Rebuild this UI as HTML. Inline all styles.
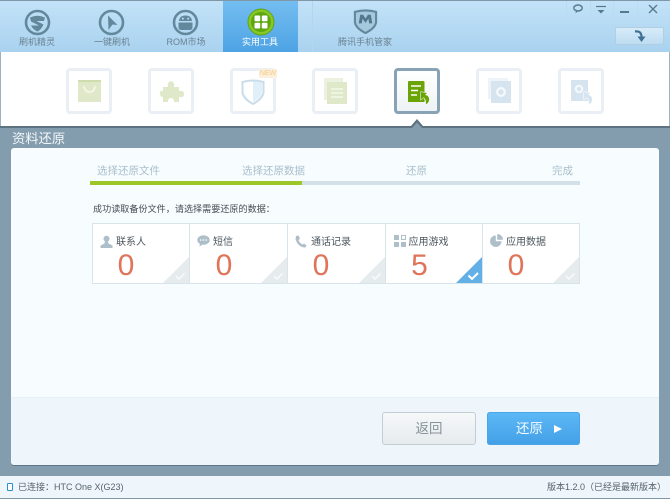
<!DOCTYPE html>
<html lang="zh">
<head>
<meta charset="utf-8">
<style>
html{margin:0;padding:0;width:670px;height:499px;overflow:hidden;background:#849dae}
body{margin:0;padding:0;width:670px;height:499px;overflow:hidden;background:#849dae;font-family:"Liberation Sans","Noto Sans CJK SC",sans-serif;position:relative;filter:blur(.35px)}
div,span,svg{position:absolute;display:block}
.t{white-space:nowrap;line-height:1}
.navt{font-size:9px;color:#6a8292;top:38px;text-align:center;width:80px}
.tile{top:68px;width:40px;height:40px;border:3px solid #e9eff4;border-radius:4px;background:#fff}
.card{top:223px;height:59px;background:#fff;border:1px solid #d9e4ea;box-sizing:content-box}
.lab{font-size:10px;color:#4d575e;top:14px}
.num{font-size:30px;color:#e0745a;top:27px;width:70px;text-align:center;line-height:30px;position:absolute}
.step{font-size:10.5px;color:#a9bfcb;top:166px}
.sep{top:1px;width:1px;height:17px;background:#badbf1}
</style>
</head>
<body>
<!-- top bar -->
<div style="left:0;top:0;width:670px;height:52px;background:linear-gradient(#c2e2f8,#a9d2ef);border-top:1px solid #7f97a6;box-sizing:border-box"></div>
<div style="left:223px;top:1px;width:75px;height:51px;background:linear-gradient(#73bdf0,#4ea3e4)"></div>
<div style="left:312px;top:1px;width:1px;height:51px;background:#b3d6ee"></div>

<svg style="left:24px;top:9px" width="27" height="27" viewBox="0 0 27 27"><circle cx="13.5" cy="13.5" r="11.5" fill="none" stroke="#62889c" stroke-width="2.6"/><path d="M6 8.5 Q13.5 5 21 8.5 L20 12 H12.5 L19.5 15.5 Q17 21 13.5 22.5 Q9 20.5 7 16.5 L15 16.5 L7 12.5Z" fill="#62889c"/></svg>
<div class="t navt" style="left:-3px">刷机精灵</div>

<svg style="left:98px;top:9px" width="27" height="27" viewBox="0 0 27 27"><circle cx="13.5" cy="13.5" r="11.5" fill="none" stroke="#62889c" stroke-width="2.6"/><path d="M10 6.5 L19.5 16 L14.5 15.5 L10.5 21Z" fill="#62889c"/></svg>
<div class="t navt" style="left:72px">一键刷机</div>

<svg style="left:172px;top:9px" width="27" height="27" viewBox="0 0 27 27"><circle cx="13.5" cy="13.5" r="11.5" fill="none" stroke="#62889c" stroke-width="2.6"/><path d="M7 12 Q7.5 6.5 13.5 6.5 Q19.5 6.5 20 12Z M6.5 13.5 H20.5 V18 Q20.5 21 17.5 21 H9.5 Q6.5 21 6.5 18Z" fill="#62889c"/><circle cx="10.8" cy="9.6" r="1" fill="#bcdcf2"/><circle cx="16.2" cy="9.6" r="1" fill="#bcdcf2"/></svg>
<div class="t navt" style="left:146px">ROM市场</div>

<svg style="left:247px;top:8px" width="28" height="28" viewBox="0 0 28 28"><circle cx="14" cy="14" r="13" fill="#86c926"/><circle cx="14" cy="14" r="13" fill="none" stroke="#5fa415" stroke-width="1"/><circle cx="14" cy="14" r="10" fill="#5fa70f"/><rect x="7.5" y="7.5" width="5.7" height="5.7" rx="1" fill="#fff"/><rect x="14.8" y="7.5" width="5.7" height="5.7" rx="1" fill="#fff"/><rect x="7.5" y="14.8" width="5.7" height="5.7" rx="1" fill="#fff"/><rect x="14.8" y="14.8" width="5.7" height="5.7" rx="1" fill="#fff"/></svg>
<div class="t navt" style="left:220px;color:#fff">实用工具</div>

<svg style="left:353px;top:9px" width="25" height="25" viewBox="0 0 26 26"><path d="M2 3 Q13 0 24 3 V14 Q23 20 13 25 Q3 20 2 14Z" fill="#a5c9df" stroke="#62889c" stroke-width="2.2"/><path d="M6 15 L7.5 6 H10.5 L13 10 L15.5 6 H18.5 L20 15 H16.8 L16 10 L13 14.5 L10 10 L9.2 15Z" fill="#52788e"/></svg>
<div class="t navt" style="left:325px">腾讯手机管家</div>

<!-- window controls -->
<div class="sep" style="left:566px"></div><div class="sep" style="left:590px"></div><div class="sep" style="left:613px"></div><div class="sep" style="left:637px"></div>
<svg style="left:571px;top:3px" width="14" height="12" viewBox="0 0 14 12"><ellipse cx="7" cy="5" rx="4.2" ry="3" fill="none" stroke="#58788c" stroke-width="1.4"/><path d="M5 8 L4.5 10.5 L7 8Z" fill="#58788c"/></svg>
<svg style="left:595px;top:5px" width="12" height="10" viewBox="0 0 12 10"><path d="M1 1.5 H11" stroke="#58788c" stroke-width="1.2"/><path d="M2.5 5 H9.5 L6 8.5Z" fill="#58788c"/></svg>
<div style="left:620px;top:11px;width:9px;height:1.5px;background:#58788c"></div>
<svg style="left:647px;top:3px" width="12" height="12" viewBox="0 0 12 12"><path d="M2 2 L10 10 M10 2 L2 10" stroke="#58788c" stroke-width="1.3"/></svg>
<div style="left:615px;top:27px;width:49px;height:18px;box-sizing:border-box;border:1px solid #b0cfe2;border-radius:2px;background:linear-gradient(#d6ebf9,#bedcf0)"></div>
<svg style="left:634px;top:29px" width="14" height="14" viewBox="0 0 14 14"><path d="M1 2.5 Q7.5 1.5 7.5 8" fill="none" stroke="#3f7193" stroke-width="2.2"/><path d="M3.5 7.5 H11.5 L7.5 13Z" fill="#3f7193"/></svg>

<!-- tool strip -->
<div style="left:0;top:52px;width:670px;height:74px;background:#fff"></div>
<div style="left:0;top:52px;width:1px;height:74px;background:#9fb2bf"></div>
<div style="left:669px;top:52px;width:1px;height:74px;background:#9fb2bf"></div>
<div style="left:0;top:126px;width:670px;height:2px;background:#5d7382"></div>

<div class="tile" style="left:66px"></div>
<svg style="left:78px;top:80px" width="23" height="23" viewBox="0 0 23 23"><rect width="23" height="22" fill="#dfe8c8"/><rect y="0" width="23" height="2" fill="#cfdcae"/><path d="M6 6 Q6.5 12 11.5 12 Q16.5 12 17 6" fill="none" stroke="#f4f8e8" stroke-width="1.6"/></svg>

<div class="tile" style="left:148px"></div>
<svg style="left:160px;top:79px" width="24" height="24" viewBox="0 0 24 24"><path d="M3 8 H8 Q7 3 11 2 Q15 3 14 8 H19 V12 Q24 11 24 15 Q24 19 19 18 V23 H14 Q14 19 11 19 Q8 19 8 23 H3 V18 Q0 18 0 14 Q0 11 3 12Z" fill="#dfe8c8"/></svg>

<div class="tile" style="left:230px"></div>
<svg style="left:241px;top:79px" width="24" height="26" viewBox="0 0 24 26"><path d="M1.5 3 Q12 0 22.5 3 V14 Q21 20 12 25 Q3 20 1.5 14Z" fill="#fff" stroke="#c9dcea" stroke-width="2"/><path d="M12 2.5 Q18 2.5 21 4 V14 Q20 18.5 12 23Z" fill="#e1eff9"/></svg>
<div class="t" style="left:259px;top:69px;width:18px;height:9px;background:#fdf0da;border-radius:1px;color:#f5c98d;font-size:7px;line-height:9px;text-align:center">NEW</div>

<div class="tile" style="left:312px"></div>
<svg style="left:324px;top:78px" width="23" height="26" viewBox="0 0 23 26"><rect x="0" y="0" width="19" height="22" fill="#edf2e0"/><rect x="3" y="4" width="20" height="22" fill="#dfe8c8"/><path d="M7 11 H19 M7 15 H19 M7 19 H19" stroke="#f4f8e8" stroke-width="1.4"/></svg>

<div style="left:394px;top:68px;width:40px;height:40px;border:3px solid #88a3b6;border-radius:4px;background:linear-gradient(#fff,#eef2f5)"></div>
<svg style="left:407px;top:80px" width="24" height="26" viewBox="0 0 24 26"><path d="M1 2 Q1 1 2 1 H16.5 Q17.5 1 17.5 2 V22 H1Z" fill="#6aa406"/><path d="M4 6 H14 M4 10.5 H11 M4 15 H10" stroke="#fff" stroke-width="1.4"/><path d="M14 12 V19.5 L16.5 17.5 Q19 18 19 24.5 Q23 22 22 18 Q21 15 18 15 L20 13Z" fill="#6aa406" stroke="#fff" stroke-width="1" paint-order="stroke"/></svg>

<div class="tile" style="left:476px"></div>
<svg style="left:488px;top:78px" width="24" height="26" viewBox="0 0 24 26"><rect width="20" height="21" fill="#edf3f8"/><rect x="3" y="3" width="20" height="22" fill="#d6e4ef"/><circle cx="13" cy="14" r="3.8" fill="none" stroke="#f3f8fb" stroke-width="2.4"/></svg>

<div class="tile" style="left:558px"></div>
<svg style="left:571px;top:80px" width="24" height="26" viewBox="0 0 24 26"><rect width="17" height="21" fill="#d6e4ef"/><circle cx="8" cy="9" r="3.2" fill="none" stroke="#f3f8fb" stroke-width="2.2"/><path d="M13 12 V19.5 L15.5 17.5 Q18 18 18 24.5 Q22 22 21 18 Q20 15 17 15 L19 13Z" fill="#d6e4ef" stroke="#fff" stroke-width="1" paint-order="stroke"/></svg>

<svg style="left:406px;top:118px" width="22" height="10" viewBox="0 0 22 10"><path d="M0 8 H5 L11 1 L17 8 H22 V10 H0Z" fill="#5d7382"/><path d="M6 10 L11 4.5 L16 10Z" fill="#849dae"/></svg>

<!-- title -->
<div class="t" style="left:12px;top:132px;font-size:13.3px;color:#f2f7fa">资料还原</div>

<!-- panel -->
<div style="left:11px;top:148px;width:648px;height:317px;background:#f7fcff;border-radius:3px;box-shadow:0 1px 0 #5f7686"></div>
<div style="left:11px;top:397px;width:648px;height:68px;background:#eef5fb;border-top:1px solid #e8eff5;box-sizing:border-box;border-radius:0 0 3px 3px"></div>

<!-- steps -->
<div class="t step" style="left:97px">选择还原文件</div>
<div class="t step" style="left:242px">选择还原数据</div>
<div class="t step" style="left:406px">还原</div>
<div class="t step" style="left:552px">完成</div>
<div style="left:90px;top:181px;width:490px;height:4px;background:#d3e0e7"></div>
<div style="left:90px;top:181px;width:212px;height:4px;background:#9dc629"></div>

<div class="t" style="left:93px;top:205px;font-size:9.1px;color:#444d53">成功读取备份文件，请选择需要还原的数据：</div>

<!-- cards -->
<div class="card" style="left:92px;width:96px">
  <svg style="left:7px;top:11px" width="13" height="13" viewBox="0 0 13 13"><circle cx="6.5" cy="3.8" r="3" fill="#aebfca"/><path d="M5 6 H8 L8.5 8.5 L12.5 10.5 V13 H.5 V10.5 L4.5 8.5Z" fill="#aebfca"/></svg>
  <div class="t lab" style="left:23px">联系人</div><div class="num" style="left:-2px">0</div>
  <svg style="right:0;bottom:0" width="26" height="26" viewBox="0 0 26 26"><path d="M26 0 V26 H0Z" fill="#e6ebee"/><path d="M13 19 L16 22 L21.5 16.5" fill="none" stroke="#f7f9fa" stroke-width="1.8"/></svg>
</div>
<div class="card" style="left:189px;width:96.5px">
  <svg style="left:7px;top:11px" width="13" height="12" viewBox="0 0 13 12"><ellipse cx="6.5" cy="5" rx="6.2" ry="4.8" fill="#aebfca"/><path d="M3 8 L2.5 11.5 L6.5 9Z" fill="#aebfca"/><circle cx="3.8" cy="5" r=".8" fill="#fff"/><circle cx="6.5" cy="5" r=".8" fill="#fff"/><circle cx="9.2" cy="5" r=".8" fill="#fff"/></svg>
  <div class="t lab" style="left:23px">短信</div><div class="num" style="left:-1px">0</div>
  <svg style="right:0;bottom:0" width="26" height="26" viewBox="0 0 26 26"><path d="M26 0 V26 H0Z" fill="#e6ebee"/><path d="M13 19 L16 22 L21.5 16.5" fill="none" stroke="#f7f9fa" stroke-width="1.8"/></svg>
</div>
<div class="card" style="left:287px;width:96.5px">
  <svg style="left:7px;top:11px" width="12" height="13" viewBox="0 0 12 13"><path d="M1 1 L3.5 .5 L5 3.5 L3.5 5 Q4.5 8 7.5 9.5 L9 8.5 L11.5 10.5 L10.5 12.5 Q3 12.5 .5 4Z" fill="#aebfca"/></svg>
  <div class="t lab" style="left:23px">通话记录</div><div class="num" style="left:-2px">0</div>
  <svg style="right:0;bottom:0" width="26" height="26" viewBox="0 0 26 26"><path d="M26 0 V26 H0Z" fill="#e6ebee"/><path d="M13 19 L16 22 L21.5 16.5" fill="none" stroke="#f7f9fa" stroke-width="1.8"/></svg>
</div>
<div class="card" style="left:384.5px;width:96.5px">
  <svg style="left:8px;top:11px" width="12" height="12" viewBox="0 0 12 12"><rect width="5" height="5" fill="#aebfca"/><rect x="7.5" y=".5" width="4" height="4" fill="none" stroke="#aebfca"/><rect y="7" width="5" height="5" fill="#aebfca"/><rect x="7" y="7" width="5" height="5" fill="#aebfca"/></svg>
  <div class="t lab" style="left:23px">应用游戏</div><div class="num" style="left:-1px">5</div>
  <svg style="right:0;bottom:0" width="26" height="26" viewBox="0 0 26 26"><path d="M26 0 V26 H0Z" fill="#62b0e6"/><path d="M12.5 18.5 L16 22 L22 16" fill="none" stroke="#fff" stroke-width="2"/></svg>
</div>
<div class="card" style="left:482px;width:96px">
  <svg style="left:7px;top:10px" width="13" height="13" viewBox="0 0 13 13"><path d="M5.8 1.5 V7.2 H11.5 A5.7 5.7 0 1 1 5.8 1.5Z" fill="#aebfca"/><path d="M7.2 0 A5.8 5.8 0 0 1 13 5.8 H7.2Z" fill="#aebfca"/></svg>
  <div class="t lab" style="left:23px">应用数据</div><div class="num" style="left:-2px">0</div>
  <svg style="right:0;bottom:0" width="26" height="26" viewBox="0 0 26 26"><path d="M26 0 V26 H0Z" fill="#e6ebee"/><path d="M13 19 L16 22 L21.5 16.5" fill="none" stroke="#f7f9fa" stroke-width="1.8"/></svg>
</div>

<!-- buttons -->
<div class="t" style="left:382px;top:412px;width:94px;height:33px;box-sizing:border-box;border:1px solid #c3ced4;border-radius:3px;background:linear-gradient(#f6f8f9,#e6ebee);color:#87929a;font-size:13.5px;line-height:31px;text-align:center">返回</div>
<div style="left:487px;top:412px;width:93px;height:33px;border-radius:3px;background:linear-gradient(#5db8f6,#43a0e6);box-shadow:inset 0 0 0 1px #4ba5e8"></div>
<div class="t" style="left:516px;top:422px;color:#f4faff;font-size:13.5px">还原</div>
<svg style="left:553px;top:424px" width="10" height="10" viewBox="0 0 10 10"><path d="M1 1 L9 5 L1 9Z" fill="#fff"/></svg>

<!-- status bar -->
<div style="left:0;top:476px;width:670px;height:23px;background:#eff6fb;border-bottom:1px solid #7f97a6;box-sizing:border-box"></div>
<div style="left:7px;top:483px;width:4px;height:6px;border:1.5px solid #2d8fd0;border-radius:1px;background:#fff"></div>
<div class="t" style="left:18px;top:483px;font-size:9px;color:#56626a">已连接：HTC One X(G23)</div>
<div class="t" style="right:4px;top:483px;font-size:9px;color:#56626a">版本1.2.0（已经是最新版本）</div>
</body>
</html>
